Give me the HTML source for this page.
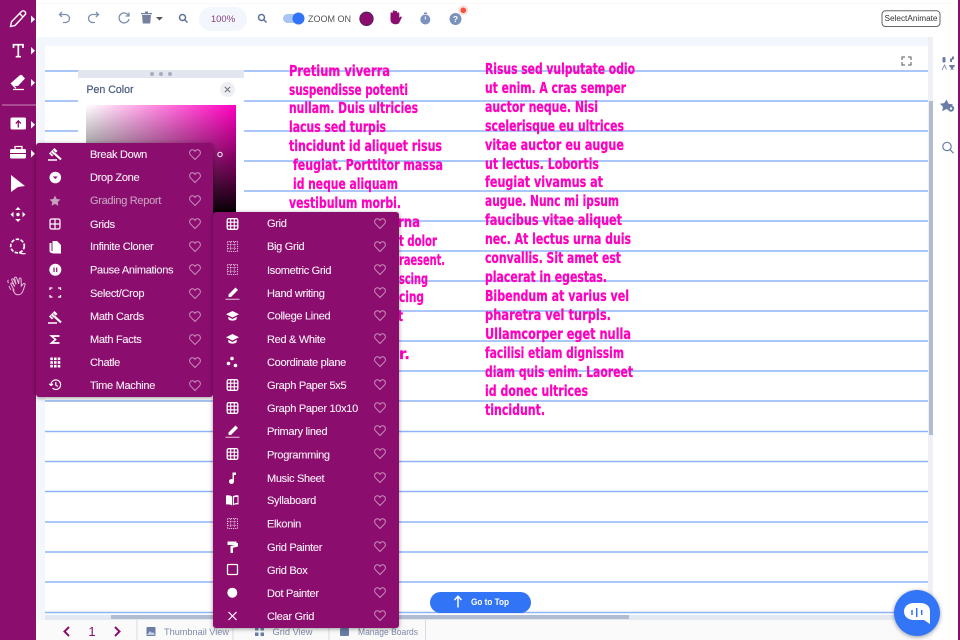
<!DOCTYPE html>
<html><head><meta charset="utf-8">
<style>
html,body{margin:0;padding:0;width:960px;height:640px;overflow:hidden;background:#fff;font-family:"Liberation Sans",sans-serif}
svg{position:absolute;left:0;top:0}
.hw{font-family:"DejaVu Sans",sans-serif;font-weight:bold;font-size:15px;fill:#ff00bf;stroke:#ff00bf;stroke-width:.25px}
.m{font-family:"Liberation Sans",sans-serif;font-size:11px;letter-spacing:-.3px;fill:#f8eef5;stroke:#f8eef5;stroke-width:.12px}
.b{font-family:"Liberation Sans",sans-serif;font-size:9.5px;fill:#7c88a6}
</style></head><body>
<svg width="960" height="640" viewBox="0 0 960 640">
<defs>
<linearGradient id="gh" x1="0" x2="1" y1="0" y2="0"><stop offset="0" stop-color="#fff"/><stop offset="1" stop-color="#ff00bf"/></linearGradient>
<linearGradient id="gv" x1="0" x2="0" y1="0" y2="1"><stop offset="0" stop-color="#000" stop-opacity="0"/><stop offset="1" stop-color="#000"/></linearGradient>
<filter id="sh" x="-10%" y="-10%" width="120%" height="120%"><feDropShadow dx="0" dy="1" stdDeviation="2" flood-color="#000" flood-opacity=".4"/></filter>
<symbol id="h" viewBox="0 0 12 11" overflow="visible"><path d="M6 10.5 1.400 5.800C0 4.300.5 1.300 3 .8 4.400.6 5.400 1.300 6 2.400 6.600 1.300 7.600.6 9 .8c2.500.5 3 3.500 1.600 5z" fill="none" stroke="#c98cbb" stroke-width="1"/></symbol>
<symbol id="g" viewBox="0 0 12 12" overflow="visible"><rect x=".7" y=".7" width="10.600" height="10.600" rx="1.500" fill="none" stroke="#fff" stroke-width="1.300"/><path d="M4.200 1v10M7.800 1v10M1 4.200h10M1 7.800h10" stroke="#fff" stroke-width="1.100"/></symbol>
<symbol id="d" viewBox="0 0 12 12" overflow="visible"><rect x=".5" y=".5" width="11" height="11" fill="none" stroke="#f0d8ea" stroke-width="1.100" stroke-dasharray="1 1"/><path d="M4 1v10M8 1v10M1 4h10M1 8h10" stroke="#f0d8ea" stroke-width="1" stroke-dasharray="1 1"/></symbol>
<symbol id="p" viewBox="0 0 14 14" overflow="visible"><path d="M3 8.500 10 1.500l2.500 2.500-7 7H3z" fill="#fff"/><path d="M0 13.300h14" stroke="#d9a9cc" stroke-width="1.200"/></symbol>
<symbol id="c" viewBox="0 0 14 12" overflow="visible"><path d="M7 1 .5 4.300 7 7.500l6.500-3.200z" fill="#fff"/><path d="M2.800 6.800V9C4 11.200 10 11.200 11.200 9V6.800L7 9z" fill="#fff"/></symbol>
<symbol id="gav" viewBox="0 0 14 14" overflow="visible"><path d="M0 13h9" stroke="#fff" stroke-width="1.500"/><path d="M1 6.500 6.500 1 9.500 4 4 9.500z" fill="#fff"/><path d="M3 5.500l3 3M5 3.500l3 3" stroke="#8b0e6e" stroke-width=".7"/><path d="M6.800 6.800 13 12.500" stroke="#fff" stroke-width="2.200"/></symbol>
</defs>

<!-- page chrome -->
<rect x="36" y="0" width="924" height="640" fill="#fff"/>
<rect x="36" y="3" width="915" height="1" fill="#f8f8fb"/>
<rect x="37" y="37" width="896" height="583" fill="#f3f6fd"/>
<rect x="45" y="46" width="883" height="570" fill="#fff"/>
<rect x="928" y="37" width="5" height="580" fill="#eef0f6"/>
<rect x="929" y="101" width="4" height="334" fill="#b1bcd0"/>
<rect x="958" y="0" width="2" height="640" fill="#8b0e6e"/>

<!-- ruled lines -->
<g stroke="#8fb4f6" stroke-width="1.500">
<path d="M45 71H928M45 101H928M45 131H928M45 161H928M45 191H928M45 221H928M45 251H928M45 281H928M45 311H928M45 341H928M45 371H928M45 401H928M45 431.500H928M45 461.500H928M45 491.500H928M45 522H928M45 552H928M45 582H928M45 612.500H928"/>
</g>
<rect x="45" y="615" width="883" height="5" fill="#e4e8f0"/>
<rect x="111" y="615" width="518" height="4" fill="#b1bcd0"/>

<!-- handwritten text -->
<g class="hw">
<text x="289" y="76" textLength="101" lengthAdjust="spacingAndGlyphs">Pretium viverra</text>
<text x="289" y="95" textLength="119" lengthAdjust="spacingAndGlyphs">suspendisse potenti</text>
<text x="289" y="113" textLength="129" lengthAdjust="spacingAndGlyphs">nullam. Duis ultricies</text>
<text x="289" y="132" textLength="97" lengthAdjust="spacingAndGlyphs">lacus sed turpis</text>
<text x="289" y="151" textLength="153" lengthAdjust="spacingAndGlyphs">tincidunt id aliquet risus</text>
<text x="293" y="170" textLength="150" lengthAdjust="spacingAndGlyphs">feugiat. Porttitor massa</text>
<text x="293" y="189" textLength="105" lengthAdjust="spacingAndGlyphs">id neque aliquam</text>
<text x="289" y="208" textLength="112" lengthAdjust="spacingAndGlyphs">vestibulum morbi.</text>
<text x="398" y="227" textLength="22" lengthAdjust="spacingAndGlyphs">rna</text>
<text x="399" y="246" textLength="38" lengthAdjust="spacingAndGlyphs">t dolor</text>
<text x="399" y="265" textLength="46" lengthAdjust="spacingAndGlyphs">raesent.</text>
<text x="399" y="284" textLength="29" lengthAdjust="spacingAndGlyphs">scing</text>
<text x="399" y="302" textLength="25" lengthAdjust="spacingAndGlyphs">cing</text>
<text x="398" y="321" textLength="5" lengthAdjust="spacingAndGlyphs">t</text>
<text x="399" y="359" textLength="11" lengthAdjust="spacingAndGlyphs">r.</text>

<text x="485" y="74" textLength="150" lengthAdjust="spacingAndGlyphs">Risus sed vulputate odio</text>
<text x="485" y="93" textLength="141" lengthAdjust="spacingAndGlyphs">ut enim. A cras semper</text>
<text x="485" y="112" textLength="113" lengthAdjust="spacingAndGlyphs">auctor neque. Nisi</text>
<text x="485" y="131" textLength="139" lengthAdjust="spacingAndGlyphs">scelerisque eu ultrices</text>
<text x="485" y="150" textLength="139" lengthAdjust="spacingAndGlyphs">vitae auctor eu augue</text>
<text x="485" y="169" textLength="114" lengthAdjust="spacingAndGlyphs">ut lectus. Lobortis</text>
<text x="485" y="187" textLength="118" lengthAdjust="spacingAndGlyphs">feugiat vivamus at</text>
<text x="485" y="206" textLength="134" lengthAdjust="spacingAndGlyphs">augue. Nunc mi ipsum</text>
<text x="485" y="225" textLength="137" lengthAdjust="spacingAndGlyphs">faucibus vitae aliquet</text>
<text x="485" y="244" textLength="146" lengthAdjust="spacingAndGlyphs">nec. At lectus urna duis</text>
<text x="485" y="263" textLength="136" lengthAdjust="spacingAndGlyphs">convallis. Sit amet est</text>
<text x="485" y="282" textLength="122" lengthAdjust="spacingAndGlyphs">placerat in egestas.</text>
<text x="485" y="301" textLength="144" lengthAdjust="spacingAndGlyphs">Bibendum at varius vel</text>
<text x="485" y="320" textLength="126" lengthAdjust="spacingAndGlyphs">pharetra vel turpis.</text>
<text x="485" y="339" textLength="146" lengthAdjust="spacingAndGlyphs">Ullamcorper eget nulla</text>
<text x="485" y="358" textLength="139" lengthAdjust="spacingAndGlyphs">facilisi etiam dignissim</text>
<text x="485" y="377" textLength="148" lengthAdjust="spacingAndGlyphs">diam quis enim. Laoreet</text>
<text x="485" y="396" textLength="103" lengthAdjust="spacingAndGlyphs">id donec ultrices</text>
<text x="485" y="415" textLength="60" lengthAdjust="spacingAndGlyphs">tincidunt.</text>
</g>

<!-- fullscreen icon -->
<path d="M902 60v-3h3M908 57h3v3M911 62v3h-3M905 65h-3v-3" fill="none" stroke="#555" stroke-width="1"/>

<!-- pen color panel -->
<rect x="78" y="70" width="166" height="320" fill="#fff"/>
<rect x="78" y="70" width="166" height="8" fill="#e2e6ee"/>
<circle cx="152" cy="74" r="2" fill="#a8aec0"/><circle cx="161" cy="74" r="2" fill="#a8aec0"/><circle cx="170" cy="74" r="2" fill="#a8aec0"/>
<text x="86.500" y="93" font-size="11" fill="#4d5d80" stroke="#4d5d80" stroke-width=".25" font-family="Liberation Sans" textLength="47" lengthAdjust="spacingAndGlyphs">Pen Color</text>
<circle cx="227.500" cy="89.500" r="7.500" fill="#eeeff2"/>
<path d="M224.800 86.800 230.200 92.200M230.200 86.800 224.800 92.200" stroke="#667" stroke-width="1"/>
<rect x="86" y="105" width="150" height="110" fill="url(#gh)"/>
<rect x="86" y="105" width="150" height="110" fill="url(#gv)"/>
<circle cx="220" cy="154.500" r="2.200" fill="none" stroke="#fff" stroke-width="1"/>

<!-- top toolbar -->
<g fill="none" stroke="#7c8fb2" stroke-width="1.300">
<path d="M60 14.500h5.500a4 4 0 0 1 0 8H63M62 12l-2.500 2.500 2.500 2.500"/>
<path d="M98 14.500h-5.500a4 4 0 0 0 0 8H95M96 12l2.500 2.500L96 17"/>
<path d="M128.500 15.500a5 5 0 1 0 .5 3.500M129 12.500v3.500h-3.500"/>
</g>
<path d="M142 15h9l-.8 8.500h-7.400zM141 13h11v1.200h-11zM145 11.500h3V13h-3z" fill="#73809f"/>
<path d="M156 17h7l-3.500 3.500z" fill="#555"/>
<g fill="none" stroke="#5d7199" stroke-width="1.500"><circle cx="182.500" cy="17.500" r="3"/><path d="M185 20l2.500 2.500"/><circle cx="261.500" cy="17.500" r="3"/><path d="M264 20l2.500 2.500"/></g>
<rect x="199" y="7" width="48" height="24" rx="12" fill="#f3f6fd"/>
<text x="223" y="22" text-anchor="middle" font-size="9.500" fill="#8a3f80" font-family="Liberation Sans">100%</text>
<rect x="283" y="14" width="16" height="9" rx="4.500" fill="#a9c4f5"/>
<circle cx="298.500" cy="18.500" r="6" fill="#3274f6"/>
<text x="308" y="22" font-size="9.500" fill="#555" font-family="Liberation Sans" textLength="43" lengthAdjust="spacingAndGlyphs">ZOOM ON</text>
<circle cx="366.500" cy="18.800" r="6.800" fill="#8b0e6e" stroke="#3a2050" stroke-width=".7"/>
<path d="M390.500 16.500v-3a1.100 1.100 0 0 1 2.200 0V16v-4.500a1.100 1.100 0 0 1 2.200 0V16v-4a1.100 1.100 0 0 1 2.200 0V16v-2.500a1.100 1.100 0 0 1 2.200 0V18l.9-1.200c.9-.7 1.900.1 1.400 1.100l-2.300 4.600c-.6 1.200-1.700 1.800-3.400 1.800-3 0-5.400-1.700-5.400-4.300z" fill="#8b0e6e"/>
<circle cx="425.300" cy="19.500" r="5" fill="#7a92bd"/><rect x="424" y="12.500" width="3" height="1.500" fill="#7a92bd"/><path d="M425.300 19.500v-3" stroke="#fff" stroke-width="1"/>
<circle cx="455.500" cy="19" r="6" fill="#7a92bd"/>
<text x="455.500" y="22" text-anchor="middle" font-size="8.500" font-weight="bold" fill="#fff" font-family="Liberation Sans">?</text>
<circle cx="463.300" cy="10.300" r="5" fill="#fde0dc"/><circle cx="463.300" cy="10.300" r="2.800" fill="#f8503c"/>
<rect x="882" y="10.800" width="58" height="15.700" rx="3.500" fill="#fff" stroke="#666" stroke-width="1"/>
<text x="911" y="21" text-anchor="middle" font-size="8" fill="#333" font-family="Liberation Sans" textLength="53" lengthAdjust="spacingAndGlyphs">SelectAnimate</text>

<!-- right strip icons -->
<g fill="#6b7da6">
<rect x="942.500" y="57" width="3" height="5.500" rx="1"/><path d="M950 62v-3l2-1v-1.500h2V59l-2 1v2zM949 65h6l-1 2.500h-1v1.500h1v.5h-4V69h1v-1.500h-1z"/>
<path d="M942 70l2.500-5 2 4.500" fill="none" stroke="#6b7da6" stroke-width=".8"/>
<path d="M946.500 99.500l2 4.200 4.500.5-3.200 3.300.7 3.500-4-2-4.300 2.300.8-4.500-3.200-3.100 4.400-.6z"/>
<circle cx="951" cy="108.500" r="3.200"/><circle cx="951" cy="108.500" r="1.200" fill="#fff"/>
</g>
<g fill="none" stroke="#6b7da6" stroke-width="1.200"><circle cx="947" cy="146.500" r="4.200"/><path d="M950 149.700l3.500 3.500"/></g>

<!-- bottom bar -->
<rect x="37" y="620" width="896" height="20" fill="#fafafb"/>
<path d="M137 620v20M233 620v20M329 620v20M425.500 620v20" stroke="#d9dbe4" stroke-width="1"/>
<path d="M69 627l-4.500 4.500 4.500 4.500M115 627l4.500 4.500-4.500 4.500" fill="none" stroke="#8b0e6e" stroke-width="2"/>
<text x="92" y="636" text-anchor="middle" font-size="13" fill="#8b0e6e" font-family="Liberation Sans">1</text>
<rect x="146.500" y="627" width="9" height="9" rx="1" fill="#6b7da6"/><path d="M147 635l3-4 2 2 1-1 2 3z" fill="#c7d0e2"/>
<text class="b" x="164" y="635" textLength="65" lengthAdjust="spacingAndGlyphs">Thumbnail View</text>
<g fill="#6b7da6"><rect x="255" y="627" width="3.500" height="3.500"/><rect x="260.500" y="627" width="3.500" height="3.500"/><rect x="255" y="632.500" width="3.500" height="3.500"/><rect x="260.500" y="632.500" width="3.500" height="3.500"/></g>
<text class="b" x="272.500" y="635" textLength="40" lengthAdjust="spacingAndGlyphs">Grid View</text>
<rect x="340" y="628" width="9" height="8" rx="1" fill="#6b7da6"/>
<text class="b" x="358" y="635" textLength="60" lengthAdjust="spacingAndGlyphs">Manage Boards</text>

<!-- left sidebar -->
<rect x="0" y="0" width="36" height="640" fill="#8b0e6e"/>
<path d="M2 105h34" stroke="#c78ab8" stroke-width="1"/>
<path d="M31 15.500v7.500l4-3.750zM31 47v7.500l4-3.750zM31 79v7.500l4-3.750zM31 121v7.500l4-3.750zM31 150v7.500l4-3.750z" fill="#fff"/>
<path d="M10.500 26.500l1-4.800L21.500 11.500c1-1 2.500-1 3.500.2s.8 2.300-.2 3.300L15 25.500zM19.500 13.500l3.500 3.500" fill="none" stroke="#fff" stroke-width="1.400"/>
<path d="M13.500 48v-3.300h9.500V48M18.300 44.700v12M15.700 56.700h5.200" fill="none" stroke="#fff" stroke-width="1.700"/>
<path d="M11 83l8.500-7.500c1-.8 2-.8 2.800 0l2.700 3-7 7.500h-4z" fill="#fff"/><path d="M11 83l5 5.300M13 89.500h11" stroke="#fff" stroke-width="1.300" fill="none"/>
<rect x="10.500" y="117.500" width="15.500" height="12" rx="1.500" fill="#fff"/><path d="M18.300 127.500v-6M15.800 123.500l2.500-2.700 2.500 2.700" stroke="#8b0e6e" stroke-width="1.300" fill="none"/>
<path d="M15 149v-2.500h7v2.500" fill="none" stroke="#fff" stroke-width="1.300"/><rect x="10" y="149" width="16" height="9.500" rx="1.500" fill="#fff"/><rect x="10" y="153" width="16" height="1" fill="#8b0e6e"/>
<path d="M11 175l14 11-7 1-7 5z" fill="#fff"/>
<path d="M18 207l2.800 3h-5.600zM18 222l2.800-3h-5.600zM10.500 214.500l3-2.800v5.600zM25.500 214.500l-3-2.800v5.600z" fill="#fff"/><circle cx="18" cy="214.500" r="1.700" fill="#fff"/>
<circle cx="17.500" cy="246" r="6.800" fill="none" stroke="#fff" stroke-width="1.700" stroke-dasharray="3.500 1.500"/><path d="M19 252.500c2 1 4.500 1.500 6.500 1" stroke="#fff" stroke-width="1.300" fill="none"/>
<g fill="none" stroke="#e3bdd8" stroke-width="1"><path d="M14 290l-3-5.500c-.8-1.500 1-2 1.800-.8l2 3-3-6.500c-.6-1.500 1.200-2 1.800-.8l2.500 5-1.500-6c-.3-1.500 1.500-1.800 2-.5l2 6 .5-5c.2-1.300 2-1.200 2 .2l.2 7 2-2.300c1-1 2.300 0 1.600 1.300l-1.600 5c-1 3-2.500 4.700-5.300 4.700-2 0-3.300-1-5-4.800z"/><path d="M9 286c.5 1.500 1 2.500 2 3.800M8.500 280c-1 .5-.8 1.800 0 3"/></g>

<!-- left menu -->
<rect x="36" y="143" width="177" height="254" rx="3" fill="#8b0e6e" filter="url(#sh)"/>
<g class="m">
<text x="90" y="158">Break Down</text>
<text x="90" y="181">Drop Zone</text>
<text x="90" y="204" style="fill:#c6a0bd;stroke:#c6a0bd">Grading Report</text>
<text x="90" y="228">Grids</text>
<text x="90" y="250">Infinite Cloner</text>
<text x="90" y="273.500">Pause Animations</text>
<text x="90" y="297">Select/Crop</text>
<text x="90" y="320">Math Cards</text>
<text x="90" y="343">Math Facts</text>
<text x="90" y="366">Chatle</text>
<text x="90" y="389">Time Machine</text>
</g>
<use href="#h" x="189" y="149" width="12" height="11"/><use href="#h" x="189" y="172" width="12" height="11"/><use href="#h" x="189" y="195" width="12" height="11"/><use href="#h" x="189" y="218" width="12" height="11"/><use href="#h" x="189" y="241" width="12" height="11"/><use href="#h" x="189" y="264" width="12" height="11"/><use href="#h" x="189" y="288" width="12" height="11"/><use href="#h" x="189" y="311" width="12" height="11"/><use href="#h" x="189" y="334" width="12" height="11"/><use href="#h" x="189" y="357" width="12" height="11"/><use href="#h" x="189" y="380" width="12" height="11"/>
<use href="#gav" x="48" y="147" width="14" height="14"/>
<circle cx="55.300" cy="177.500" r="5.800" fill="#fff"/><path d="M52.800 176.500h5l-2.500 2.500z" fill="#8b0e6e"/>
<path d="M55 195.500l1.700 3.500 3.800.5-2.800 2.600.7 3.700-3.400-1.800-3.400 1.800.7-3.700-2.800-2.600 3.800-.5z" fill="#c6a0bd"/>
<rect x="50" y="219" width="10" height="10" rx="1.500" fill="none" stroke="#fff" stroke-width="1.200"/><path d="M55 219v10M50 224h10" stroke="#fff" stroke-width="1.200"/>
<path d="M49.500 243h2v8h5v2h-5.500l-1.500-1.500z" fill="#fff"/><path d="M52.500 241h4.500l4 4v8.500h-8.500z" fill="#fff"/>
<circle cx="55.300" cy="269.700" r="6" fill="#fff"/><path d="M54 267.500v4.500M56.700 267.500v4.500" stroke="#8b0e6e" stroke-width="1.200"/>
<path d="M50 290v-2h2.500M58 288h2.500v2M60.500 295v2H58M52.500 297H50v-2" fill="none" stroke="#fff" stroke-width="1.300"/>
<use href="#gav" x="48" y="310" width="14" height="14"/>
<path d="M59.500 336h-8l4 3.500-4 3.500h8" fill="none" stroke="#fff" stroke-width="1.700"/>
<g fill="#fff"><rect x="50.300" y="357.500" width="2.600" height="2.600"/><rect x="54" y="357.500" width="2.600" height="2.600"/><rect x="57.700" y="357.500" width="2.600" height="2.600"/><rect x="50.300" y="361.200" width="2.600" height="2.600"/><rect x="54" y="361.200" width="2.600" height="2.600"/><rect x="57.700" y="361.200" width="2.600" height="2.600"/><rect x="50.300" y="364.900" width="2.600" height="2.600"/><rect x="54" y="364.900" width="2.600" height="2.600"/><rect x="57.700" y="364.900" width="2.600" height="2.600"/></g>
<path d="M51 384.500a4.800 4.800 0 1 1 1.500 3.700M49.200 383.800l2 1.700 1.800-1.700M55.800 382v3.200l2 1.200" fill="none" stroke="#fff" stroke-width="1.200"/>

<!-- right menu -->
<rect x="213" y="212" width="186" height="416" rx="3" fill="#8b0e6e" filter="url(#sh)"/>
<g class="m">
<text x="267" y="227">Grid</text>
<text x="267" y="250">Big Grid</text>
<text x="267" y="274">Isometric Grid</text>
<text x="267" y="297">Hand writing</text>
<text x="267" y="319.500">College Lined</text>
<text x="267" y="343">Red &amp; White</text>
<text x="267" y="366">Coordinate plane</text>
<text x="267" y="389">Graph Paper 5x5</text>
<text x="267" y="412">Graph Paper 10x10</text>
<text x="267" y="435">Primary lined</text>
<text x="267" y="458.500">Programming</text>
<text x="267" y="482">Music Sheet</text>
<text x="267" y="504">Syllaboard</text>
<text x="267" y="527.500">Elkonin</text>
<text x="267" y="551">Grid Painter</text>
<text x="267" y="574">Grid Box</text>
<text x="267" y="597">Dot Painter</text>
<text x="267" y="620">Clear Grid</text>
</g>
<use href="#h" x="374" y="218" width="12" height="11"/><use href="#h" x="374" y="241" width="12" height="11"/><use href="#h" x="374" y="264" width="12" height="11"/><use href="#h" x="374" y="287" width="12" height="11"/><use href="#h" x="374" y="310" width="12" height="11"/><use href="#h" x="374" y="333" width="12" height="11"/><use href="#h" x="374" y="356" width="12" height="11"/><use href="#h" x="374" y="379" width="12" height="11"/><use href="#h" x="374" y="402" width="12" height="11"/><use href="#h" x="374" y="425" width="12" height="11"/><use href="#h" x="374" y="448" width="12" height="11"/><use href="#h" x="374" y="472" width="12" height="11"/><use href="#h" x="374" y="495" width="12" height="11"/><use href="#h" x="374" y="518" width="12" height="11"/><use href="#h" x="374" y="541" width="12" height="11"/><use href="#h" x="374" y="564" width="12" height="11"/><use href="#h" x="374" y="587" width="12" height="11"/><use href="#h" x="374" y="610" width="12" height="11"/>
<use href="#g" x="226.500" y="218" width="12" height="12"/>
<use href="#d" x="227" y="241" width="11" height="11"/>
<use href="#d" x="227" y="264" width="11" height="11"/>
<use href="#p" x="225.500" y="286" width="14" height="14"/>
<use href="#c" x="225.500" y="310" width="14" height="12"/>
<use href="#c" x="225.500" y="333" width="14" height="12"/>
<circle cx="232" cy="358.500" r="1.800" fill="#fff"/><circle cx="228.500" cy="363.500" r="1.800" fill="#fff"/><circle cx="235.500" cy="365.500" r="1.800" fill="#fff"/>
<use href="#g" x="226.500" y="379" width="12" height="12"/>
<use href="#g" x="226.500" y="402" width="12" height="12"/>
<use href="#p" x="225.500" y="424" width="14" height="14"/>
<use href="#g" x="226.500" y="448" width="12" height="12"/>
<path d="M232.500 472.500h3.500v2.500h-2v6.500a2.500 2.500 0 1 1-1.500-2.300z" fill="#fff"/>
<path d="M226 495.500c2.500-.5 4.800 0 6 1.200v8.800c-1.500-1-3.500-1.300-6-1zM238.500 495.500c-2.500-.5-4.800 0-5.700 1.200v8.800c1.200-1 3.200-1.300 5.700-1z" fill="#fff"/><path d="M234 497.500c1-.5 2.500-.7 3.500-.5v6c-1 0-2.500.2-3.500.7z" fill="#8b0e6e"/>
<use href="#d" x="227" y="518" width="11" height="11"/>
<path d="M227.500 541.500h9v3.500h-9zM236.500 543h1.500v3.500l-5 1.200v1h-2.500V546l5.500-1.200z" fill="#fff"/><rect x="230.500" y="548" width="2.500" height="5" fill="#fff"/>
<rect x="227.500" y="564.500" width="10" height="10" rx="1" fill="none" stroke="#fff" stroke-width="1.300"/>
<circle cx="232.300" cy="592.700" r="5" fill="#fff"/>
<path d="M228.500 612 236.500 620M236.500 612 228.500 620" stroke="#fff" stroke-width="1.200"/>

<!-- go to top -->
<rect x="430" y="592" width="101" height="21" rx="10.500" fill="#3274f6"/>
<path d="M458 607.500v-11M454.500 600l3.500-3.800 3.500 3.800" fill="none" stroke="#fff" stroke-width="1.500"/>
<text x="471" y="605" font-size="8.800" font-weight="bold" fill="#fff" font-family="Liberation Sans" textLength="38" lengthAdjust="spacingAndGlyphs">Go to Top</text>

<!-- chat -->
<circle cx="917" cy="613" r="23" fill="#3274f6" filter="url(#sh)"/>
<path d="M914 603h6c6 0 10 3 10 8v13l-6-4h-10c-6 0-10-3.500-10-8.500s4-8.500 10-8.500z" fill="#fff"/>
<path d="M912 610v5M916.700 608v9M921.700 610v5" stroke="#3274f6" stroke-width="1.500"/>
</svg>
</body></html>
